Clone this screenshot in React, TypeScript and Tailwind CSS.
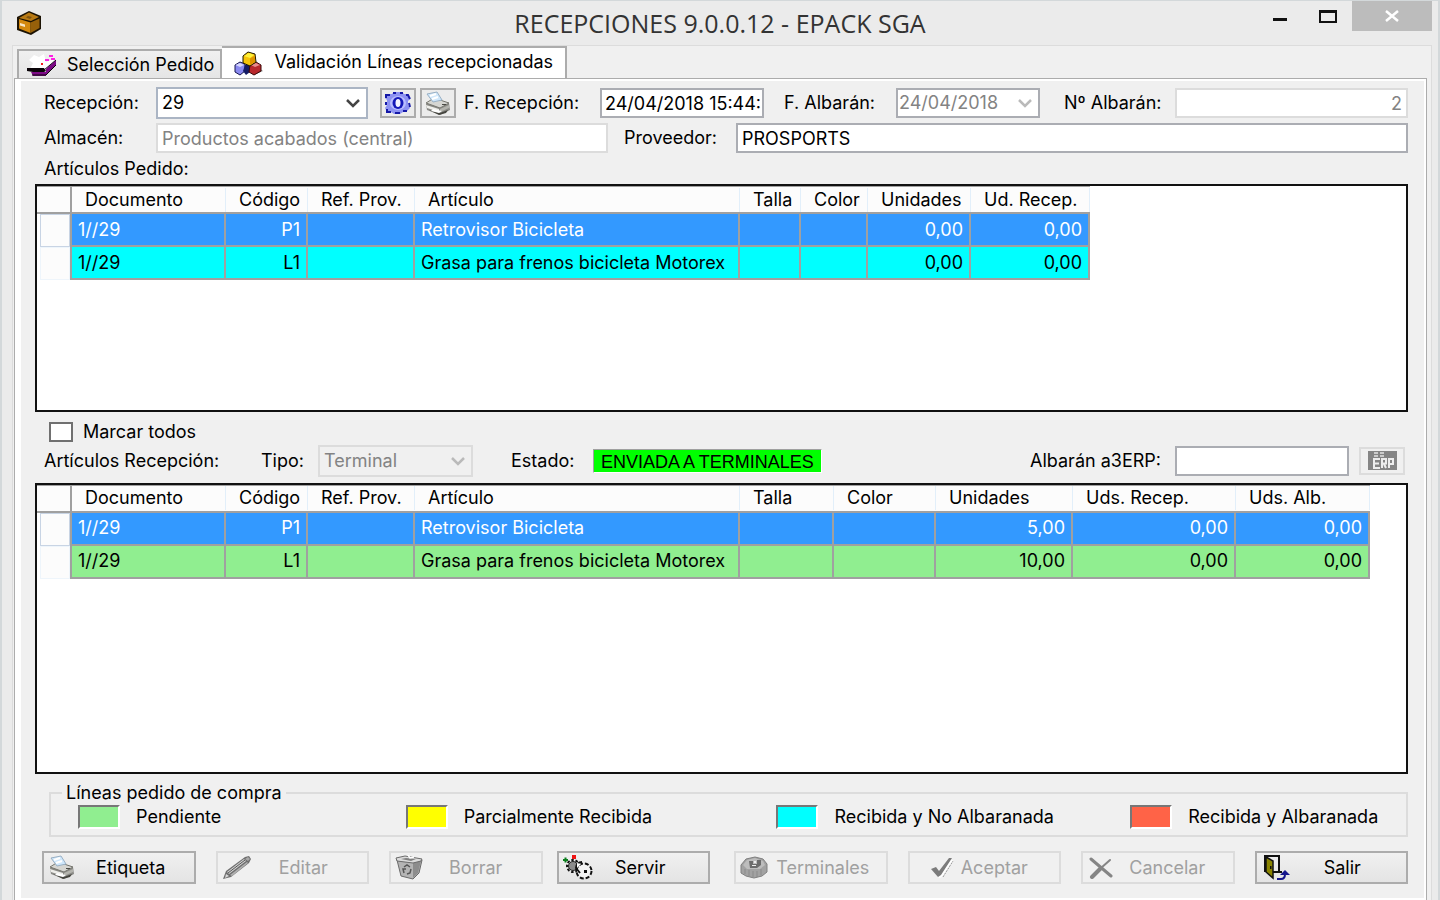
import { useState } from 'react';
import type { ReactNode } from 'react';
import clsx from 'clsx';

function BoxIcon() {
    return (
        <svg width="26" height="26" viewBox="0 0 26 26" aria-hidden="true">
            <path d="M13 1 L25 6 L25 19 L15 25 L1 20 L1 7 Z" fill="#1c1304" />
            <path d="M13 2.500 L23 7 L15 11 L3 8 Z" fill="#b87a14" />
            <path d="M3 9 L14.500 12.500 L14.500 23 L3 18.500 Z" fill="#d4890f" />
            <path d="M14.500 12.500 L23.500 8.500 L23.500 18 L14.500 23 Z" fill="#96600a" />
            <path d="M12 6 L16 7 L14 9 L10 7.500 Z" fill="#7d5310" />
            <path d="M4 13 L9 14.500 L9 17 L4 15.500 Z" fill="#f7e6c8" />
        </svg>
    );
}

function ScannerIcon() {
    return (
        <svg width="30" height="24" viewBox="0 0 30 24" aria-hidden="true">
            <path d="M2 7 L7 2 L12 4 L17 1 L19 9 L29 5 L17 17 L3 16 L6 10 Z" fill="#fff" />
            <path d="M19 16 L29 7 V12 L19 22 Z" fill="#7d0a86" />
            <path d="M4 19 H19 V23 H6 Z" fill="#7d0a86" />
            <path d="M0 15 L17 15 L19 18 L17 19 H6 L0 18 Z" fill="#0a0408" />
            <path d="M17 17 L29 7" stroke="#1a001c" strokeWidth="1" />
            <path d="M5 22 H19 L29 12" fill="none" stroke="#0a0408" strokeWidth="1" />
            <path d="M22 2 h4 v2 h-4 z M18 6 h4 v2 h-4 z M24 5 h4 v2 h-4 z" fill="#ff1fe4" />
            <path d="M14 10 h2 v2 h-2 z" fill="#f31a1a" />
        </svg>
    );
}

function CubesIcon() {
    return (
        <svg width="30" height="25" viewBox="0 0 30 25" aria-hidden="true">
            <path d="M20 24 L29 20 L26 18 L19 21 Z" fill="#8d8d8d" />
            <path d="M1 14 L6 11 L11 13 L11 20 L6 24 L1 21 Z" fill="#8a8af0" stroke="#181850" strokeWidth="1" />
            <path d="M1.500 14 L6 12 L10 14 L6 16 Z" fill="#d6d6ff" />
            <path d="M11 14 L16 14 L16 21 L12 24 L9 20 Z" fill="#141c66" />
            <path d="M16 14 L22 11 L27 14 L27 20 L20 24 L15 21 Z" fill="#b8282c" stroke="#3a0808" strokeWidth="1" />
            <path d="M17 14 L22 12 L26 14 L21 16 Z" fill="#e88c8c" />
            <path d="M9 5 L14 1 L21 3 L22 11 L16 15 L9 12 Z" fill="#f6c40a" stroke="#1d1800" strokeWidth="1" />
            <path d="M10 5 L15 2 L20 4 L16 7 Z" fill="#fff23a" />
            <path d="M16 7.500 L21 4.500 L21 11 L16 14 Z" fill="#e09500" />
        </svg>
    );
}

function GearIcon() {
    return (
        <svg width="28" height="24" viewBox="0 0 28 24" aria-hidden="true">
            <path d="M3 3 H8 L10 1 H18 L20 3 H24 L26 8 L24 10 V14 L26 17 L22 21 H19 L16 23 H10 L7 21 H3 L1 17 L3 14 V9 L1 7 Z" fill="#8d92f2" />
            <path d="M2 7 V4 H6 M9 2 H12 M16 2 H19 M22 4 H24 L26 8 M25 12 L26 16 M23 20 H19 M16 22 H11 M7 21 H3 V18 M2 14 V11" fill="none" stroke="#1418a8" strokeWidth="2" />
            <ellipse cx="14" cy="12" rx="8" ry="7" fill="#b9bdff" />
            <ellipse cx="14" cy="12" rx="5.500" ry="6" fill="#1418b8" />
            <ellipse cx="14" cy="12" rx="2.500" ry="4" fill="#f4f4ff" />
        </svg>
    );
}

function PrinterIcon() {
    return (
        <svg width="28" height="25" viewBox="0 0 28 25" aria-hidden="true">
            <path d="M2 13 L10 8 L25 12 L26 19 L16 24 L3 19 Z" fill="#8a8a86" />
            <path d="M2 12 L10 7 L25 12 L16 17 Z" fill="#d6d6d2" stroke="#77776f" strokeWidth="1" />
            <path d="M3 3 L13 1 L18 9 L9 11 Z" fill="#cfe7fb" stroke="#9ab0c4" strokeWidth="1" />
            <path d="M6 5 L12 3 M8 8 L14 6" stroke="#fff" strokeWidth="2" />
            <path d="M2 14 L15 18 L15 21 L3 17 Z" fill="#eeeeea" />
            <path d="M16 18 L25 14 L25 17 L16 21 Z" fill="#b4b4ae" />
            <path d="M5 19 L16 22 L24 19 L22 22 L15 24 Z" fill="#45453f" />
            <path d="M9 18 L18 20 L15 22 L7 20 Z" fill="#fff" />
            <path d="M18 13 h4 v1 h-4 z" fill="#4b4b46" />
        </svg>
    );
}

function PencilIcon() {
    return (
        <svg width="30" height="25" viewBox="0 0 30 25" aria-hidden="true">
            <path d="M1 24 L4 16 L23 2 L27 1 L29 4 L27 8 L9 22 Z" fill="#6f6f6f" />
            <path d="M5 17 L22 4 L24 6 L7 19 Z" fill="#d2d2d2" />
            <path d="M8 20 L25 7 L26 8 L10 21 Z" fill="#b0b0b0" />
            <path d="M23 4 L26 2 L28 4 L26 6 Z" fill="#a8a8a8" />
            <path d="M4 19 L7 21 L3 23 Z" fill="#d8d8d8" />
            <path d="M6 18 L23 5" stroke="#555" strokeWidth="1" />
        </svg>
    );
}

function BinIcon() {
    return (
        <svg width="28" height="25" viewBox="0 0 28 25" aria-hidden="true">
            <path d="M2 5 L6 21 L18 24 L24 18 L27 5 Z" fill="#b4b4b4" stroke="#6a6a6a" strokeWidth="1" />
            <path d="M18 8 L26 6 L23 18 L18 23 Z" fill="#8c8c8c" />
            <path d="M1 3 L10 1 L27 4 L26 6 L18 8 L2 6 Z" fill="#dcdcdc" stroke="#6a6a6a" strokeWidth="1" />
            <path d="M6 4 L11 3 L21 4 L16 6 Z" fill="#808080" />
            <path d="M13 0 L15 3 L19 2" fill="none" stroke="#fff" strokeWidth="1.500" />
            <path d="M9 12 L12 10 L15 12 M16 14 L15 18 L12 19 M9 18 L8 14 L11 14" fill="none" stroke="#555" strokeWidth="1.500" />
        </svg>
    );
}

function ServeIcon() {
    return (
        <svg width="30" height="25" viewBox="0 0 30 25" aria-hidden="true">
            <path d="M0 4 h5 v2 h-5 z M1.500 2.500 h2 v5 h-2 z" fill="#0a7d1c" />
            <path d="M9 0 h4 v4 h-4 z" fill="#ee1414" />
            <circle cx="10" cy="11" r="6" fill="none" stroke="#111" strokeWidth="2" strokeDasharray="2.500 1.800" />
            <circle cx="10" cy="11" r="4.500" fill="#8c8c8c" stroke="#222" strokeWidth="1" />
            <circle cx="21" cy="16" r="7" fill="#f4f4f4" />
            <circle cx="21" cy="16" r="7.500" fill="none" stroke="#111" strokeWidth="2" strokeDasharray="4 2" />
            <path d="M21 15 h3 v3 h-3 z" fill="#111" />
            <path d="M19 7 A6 6 0 0 0 13 13 L17 18" fill="none" stroke="#111" strokeWidth="2" />
            <path d="M14 8 L18 9 L14 13 Z" fill="#fff" />
        </svg>
    );
}

function TerminalIcon() {
    return (
        <svg width="28" height="23" viewBox="0 0 28 23" aria-hidden="true">
            <path d="M1 9 L6 3 L15 1 L23 3 L27 8 V16 L22 20 L14 22 L6 20 L1 17 Z" fill="#a2a2a2" stroke="#808080" strokeWidth="1" />
            <path d="M3 9 L7 4 L15 2 L23 5 L25 9 L20 13 H7 Z" fill="#bdbdbd" />
            <path d="M9 5 h4 v3 h4 v-4 h4 v5 l-4 3 h-7 z" fill="#6c6c6c" />
            <path d="M14 5 h2 v2 h-2 z M12 9 h4 v1 h-4 z" fill="#eee" />
            <path d="M5 13 V18 M9 14 V20 M13 15 V21 M17 15 V21 M21 13 V19" fill="none" stroke="#8a8a8a" strokeWidth="1" />
        </svg>
    );
}

function CheckIcon() {
    return (
        <svg width="24" height="22" viewBox="0 0 24 22" aria-hidden="true">
            <path d="M4 14 L7 13 L10 17 L20 3 L23 3 L12 20 L9 21 Z" fill="#fff" />
            <path d="M1 12 L6 10 L9 14 L19 1 L22 1 L11 18 L8 20 Z" fill="#7b7b7b" />
            <path d="M13 20 L23 4" stroke="#9a9a9a" strokeWidth="1" strokeDasharray="2 1" />
        </svg>
    );
}

function CrossIcon() {
    return (
        <svg width="25" height="22" viewBox="0 0 25 22" aria-hidden="true">
            <path d="M2 2 L22 19" stroke="#858585" strokeWidth="3" strokeLinecap="round" />
            <path d="M21 3 L12 11" stroke="#858585" strokeWidth="2" strokeLinecap="round" />
            <path d="M12 11 L3 20" stroke="#858585" strokeWidth="4" strokeLinecap="round" />
        </svg>
    );
}

function DoorIcon() {
    return (
        <svg width="28" height="25" viewBox="0 0 28 25" aria-hidden="true">
            <path d="M2 17 V1 H16 V17 H19" fill="none" stroke="#111" strokeWidth="2" />
            <path d="M10 17 H16" stroke="#111" strokeWidth="2" />
            <path d="M3 2 L10 6 V23 L3 17 Z" fill="#8a8400" stroke="#111" strokeWidth="1.500" />
            <path d="M7 11 h1.500 v3 h-1.500 z" fill="#111" />
            <path d="M14 24 H18 Q22 24 22 19" fill="none" stroke="#16168c" strokeWidth="2" />
            <path d="M17 20 L22 15 L27 20 Z" fill="#16168c" />
        </svg>
    );
}

function ErpIcon() {
    return (
        <svg width="29" height="19" viewBox="0 0 29 19" aria-hidden="true">
            <path d="M0 0 h29 v19 h-29 z" fill="#858585" />
            <path d="M6 2 h4 M6 5 h4 M12 2 h4 M12 5 h4" stroke="#e4e4e4" strokeWidth="1.500" />
            <path d="M12 8 H6 V17 H12 M6 12.500 H11 M14 17 V8 H18 V12.500 H14 M16 13 L18 17 M21 17 V8 H25 V13 H21" fill="none" stroke="#ededed" strokeWidth="2" />
        </svg>
    );
}

function Chevron({ className }: { className: string }) {
    return (
        <svg
            className={clsx('pointer-events-none absolute top-1/2 -translate-y-1/2', className)}
            width="14"
            height="10"
            viewBox="0 0 14 10"
            aria-hidden="true"
        >
            <path d="M1 2 L7 8 L13 2" fill="none" stroke="currentColor" strokeWidth="2.500" />
        </svg>
    );
}

type Column = { title: string; width: string; right?: boolean };

const baseColumns: Column[] = [
    { title: 'Documento', width: 'w-[154px]' },
    { title: 'Código', width: 'w-[82px]', right: true },
    { title: 'Ref. Prov.', width: 'w-[107px]' },
    { title: 'Artículo', width: 'w-[325px]' },
];

const orderColumns: Column[] = [
    ...baseColumns,
    { title: 'Talla', width: 'w-[61px]' },
    { title: 'Color', width: 'w-[67px]' },
    { title: 'Unidades', width: 'w-[103px]', right: true },
    { title: 'Ud. Recep.', width: 'w-[119px]', right: true },
];

const receptionColumns: Column[] = [
    ...baseColumns,
    { title: 'Talla', width: 'w-[94px]' },
    { title: 'Color', width: 'w-[102px]' },
    { title: 'Unidades', width: 'w-[137px]', right: true },
    { title: 'Uds. Recep.', width: 'w-[163px]', right: true },
    { title: 'Uds. Alb.', width: 'w-[134px]', right: true },
];

const orderRows = [
    ['1//29', 'P1', '', 'Retrovisor Bicicleta', '', '', '0,00', '0,00'],
    ['1//29', 'L1', '', 'Grasa para frenos bicicleta Motorex', '', '', '0,00', '0,00'],
];

const receptionRows = [
    ['1//29', 'P1', '', 'Retrovisor Bicicleta', '', '', '5,00', '0,00', '0,00'],
    ['1//29', 'L1', '', 'Grasa para frenos bicicleta Motorex', '', '', '10,00', '0,00', '0,00'],
];

const legend = [
    { label: 'Pendiente', color: 'bg-[#90ee90]' },
    { label: 'Parcialmente Recibida', color: 'bg-[#ffff00]' },
    { label: 'Recibida y No Albaranada', color: 'bg-[#00ffff]' },
    { label: 'Recibida y Albaranada', color: 'bg-[#ff6347]' },
];

type GridProps = { label: string; columns: Column[]; rows: string[][]; rowColor: string };

function DataGrid({ label, columns, rows, rowColor }: GridProps) {
    const [selected, setSelected] = useState(0);

    return (
        <table aria-label={label} className="w-max table-fixed border-separate border-spacing-0 whitespace-nowrap">
            <thead>
                <tr className="h-7 bg-[#fcfcfc]">
                    <th className="w-[35px] border-t border-r-2 border-b-2 border-[#a0a0a0]" />
                    {columns.map((col) => (
                        <th
                            key={col.title}
                            className={clsx('border-t border-b-2 border-[#a0a0a0] p-0 text-left font-normal', col.width)}
                        >
                            <div className="h-6 border-r border-[#e2effa] pl-[13px]">{col.title}</div>
                        </th>
                    ))}
                </tr>
            </thead>
            <tbody>
                {rows.map((row, i) => (
                    <tr
                        key={i}
                        onClick={() => setSelected(i)}
                        className={clsx('h-[33px]', i === selected ? 'bg-[#3399ff] text-white' : rowColor)}
                    >
                        <td
                            className={clsx(
                                'border-r-2 border-r-[#a0a0a0] bg-white p-0 pl-[3px]',
                                i === selected ? 'text-[#c8d4e4]' : 'text-[#eef5fb]',
                            )}
                        >
                            <div className="h-[33px] border border-current bg-[#fcfcfc]" />
                        </td>
                        {row.map((cell, j) => (
                            <td
                                key={j}
                                className={clsx(
                                    'border-r-2 border-b-2 border-[#a0a0a0] p-0 pr-1.5 pl-1.5',
                                    columns[j].right && 'text-right',
                                )}
                            >
                                {cell}
                            </td>
                        ))}
                    </tr>
                ))}
            </tbody>
        </table>
    );
}

type ActionProps = { label: string; icon: ReactNode; disabled?: boolean; className: string };

function ActionButton({ label, icon, disabled, className }: ActionProps) {
    return (
        <button
            disabled={disabled}
            className={clsx(
                'flex h-[33px] flex-[1_1_150px] items-center border-2',
                disabled
                    ? 'border-[#dcdcdc] text-[#a0a0a0]'
                    : 'border-[#acacac] bg-linear-to-b from-[#f0f0f0] to-[#e4e4e4]',
                className,
            )}
        >
            {icon}
            <span className="flex-1 text-center">{label}</span>
        </button>
    );
}

export default function App() {
    const [markAll, setMarkAll] = useState(false);

    return (
        <div className="flex min-h-screen min-w-max flex-col border-x-2 border-t border-[#d3d8da] bg-[#ebebeb] font-['Inter','Liberation_Sans',sans-serif] text-[18px] leading-6 text-black">
            <header className="grid h-11 grid-cols-[1fr_auto_1fr]">
                <div className="flex items-center pl-3.5">
                    <BoxIcon />
                </div>
                <h1 className="self-center font-['Open_Sans','Noto_Sans',sans-serif] text-[25px] text-[#333]">
                    RECEPCIONES 9.0.0.12 - EPACK SGA
                </h1>
                <div className="flex h-[30px] justify-end pr-1.5">
                    <button aria-label="Minimizar" className="flex w-12 items-center justify-center">
                        <svg width="14" height="12" viewBox="0 0 14 12">
                            <path d="M0 8 h14 v3 h-14 z" fill="#111" />
                        </svg>
                    </button>
                    <button aria-label="Maximizar" className="flex w-12 items-center justify-center">
                        <svg width="18" height="13" viewBox="0 0 18 13">
                            <path d="M1 0 V12 H17 V0" fill="none" stroke="#111" strokeWidth="2" />
                            <path d="M0 0 h18 v3 h-18 z" fill="#111" />
                        </svg>
                    </button>
                    <button aria-label="Cerrar" className="flex w-20 items-center justify-center bg-[#bcbcbc]">
                        <svg width="14" height="12" viewBox="0 0 14 12">
                            <path d="M1 1 L13 11 M13 1 L1 11" stroke="#fff" strokeWidth="2.500" />
                        </svg>
                    </button>
                </div>
            </header>

            <main className="mr-1.5 ml-2.5 flex flex-1 flex-col border border-b-0 border-[#dcdcdc] bg-[#f0f0f0] pr-1 pl-px">
                <div role="tablist" className="flex items-end pl-[3px]">
                    <button
                        role="tab"
                        aria-selected="false"
                        className="flex h-[29px] items-center gap-2.5 border-2 border-b-0 border-[#acacac] bg-linear-to-b from-[#f0f0f0] to-[#e5e5e5] pr-1.5 pl-2"
                    >
                        <ScannerIcon />
                        Selección Pedido
                    </button>
                    <button
                        role="tab"
                        aria-selected="true"
                        className="-mb-px flex h-[33px] items-center gap-2.5 border-2 border-b-0 border-l-0 border-[#acacac] bg-white px-3"
                    >
                        <CubesIcon />
                        <span className="pb-1">Validación Líneas recepcionadas</span>
                    </button>
                </div>

                <div className="flex flex-1 flex-col border border-b-0 border-[#acacac] bg-white pt-0.5 pr-0.5 pb-0.5 pl-1.5">
                    <div className="flex flex-1 flex-col bg-[#f0f0f0] pt-1.5 pr-4 pb-[14px] pl-[14px]">
                        <div className="flex h-8 items-center pl-[9px]">
                            <label htmlFor="recepcion" className="w-28">Recepción:</label>
                            <div className="relative w-[212px]">
                                <select
                                    id="recepcion"
                                    className="h-8 w-full appearance-none border-2 border-[#abb5c4] bg-white pl-1"
                                >
                                    <option>29</option>
                                </select>
                                <Chevron className="right-2 text-[#444]" />
                            </div>
                            <button
                                aria-label="Configurar"
                                className="ml-3 flex h-[30px] w-9 items-center justify-center border-2 border-[#acacac] bg-[#ececec]"
                            >
                                <GearIcon />
                            </button>
                            <button
                                aria-label="Imprimir"
                                className="ml-1 flex h-[30px] w-9 items-center justify-center border-2 border-[#acacac] bg-[#ececec]"
                            >
                                <PrinterIcon />
                            </button>
                            <label htmlFor="f-recepcion" className="ml-2 w-[136px]">F. Recepción:</label>
                            <input
                                id="f-recepcion"
                                defaultValue="24/04/2018 15:44:"
                                className="h-[30px] w-[164px] border-2 border-[#abadb3] bg-white pl-[3px]"
                            />
                            <label htmlFor="f-albaran" className="ml-5 w-28">F. Albarán:</label>
                            <div className="relative w-36 text-[#838383]">
                                <select
                                    id="f-albaran"
                                    disabled
                                    className="h-[30px] w-full appearance-none border-2 border-[#abadb3] bg-white pl-px opacity-100"
                                >
                                    <option>24/04/2018</option>
                                </select>
                                <Chevron className="right-2 text-[#bababa]" />
                            </div>
                            <label htmlFor="n-albaran" className="ml-6 w-[111px]">Nº Albarán:</label>
                            <input
                                id="n-albaran"
                                disabled
                                defaultValue="2"
                                className="h-[30px] w-0 flex-1 border-2 border-[#dcdcdc] bg-white pr-1 text-right text-[#838383]"
                            />
                        </div>

                        <div className="mt-1 flex h-[30px] items-center pl-[9px]">
                            <label htmlFor="almacen" className="w-28">Almacén:</label>
                            <input
                                id="almacen"
                                disabled
                                defaultValue="Productos acabados (central)"
                                className="h-[30px] w-[452px] border-2 border-[#dcdcdc] bg-white pl-1 text-[#838383]"
                            />
                            <label htmlFor="proveedor" className="ml-4 w-28">Proveedor:</label>
                            <input
                                id="proveedor"
                                defaultValue="PROSPORTS"
                                className="h-[30px] w-0 flex-1 border-2 border-[#abadb3] bg-white pl-1"
                            />
                        </div>

                        <h2 className="pt-1 pb-[3px] pl-[9px]">Artículos Pedido:</h2>
                        <section className="flex-[226_1_0] border-2 border-[#111] bg-white">
                            <DataGrid label="Artículos Pedido" columns={orderColumns} rows={orderRows} rowColor="bg-[#00ffff]" />
                        </section>

                        <label className="mt-2 flex h-6 items-center gap-2.5 self-start pl-[14px]">
                            <input
                                type="checkbox"
                                checked={markAll}
                                onChange={(e) => setMarkAll(e.target.checked)}
                                className="h-5 w-6 appearance-none border-2 border-[#707070] bg-white checked:bg-[#707070]"
                            />
                            Marcar todos
                        </label>

                        <div className="mt-px flex h-8 items-center pl-[9px]">
                            <h2 className="w-[217px]">Artículos Recepción:</h2>
                            <label htmlFor="tipo" className="w-[57px]">Tipo:</label>
                            <div className="relative w-[155px] text-[#838383]">
                                <select
                                    id="tipo"
                                    disabled
                                    className="h-8 w-full appearance-none border-2 border-[#dcdcdc] bg-[#f0f0f0] pl-1 opacity-100"
                                >
                                    <option>Terminal</option>
                                </select>
                                <Chevron className="right-2 text-[#bababa]" />
                            </div>
                            <span className="ml-[38px] w-[82px]">Estado:</span>
                            <output className="h-6 border border-t-[#a0a0a0] border-r-white border-b-white border-l-[#a0a0a0] bg-[#00ff00] px-[7px] font-['Liberation_Sans',sans-serif]">
                                ENVIADA A TERMINALES
                            </output>
                            <label htmlFor="albaran-erp" className="mr-[14px] ml-auto">Albarán a3ERP:</label>
                            <input
                                id="albaran-erp"
                                className="h-[30px] w-[174px] border-2 border-[#abadb3] bg-white pl-1"
                            />
                            <button
                                aria-label="Enviar a a3ERP"
                                disabled
                                className="mr-[3px] ml-2.5 flex h-7 w-[46px] items-center justify-center border-2 border-[#dcdcdc]"
                            >
                                <ErpIcon />
                            </button>
                        </div>

                        <section className="mt-1.5 flex-[290_1_0] border-2 border-[#111] bg-white">
                            <DataGrid label="Artículos Recepción" columns={receptionColumns} rows={receptionRows} rowColor="bg-[#90ee90]" />
                        </section>

                        <fieldset className="mt-[7px] ml-[14px] border-2 border-[#dcdcdc] pb-1.5 pl-[27px]">
                            <legend className="-ml-4 px-1">Líneas pedido de compra</legend>
                            <ul className="grid grid-cols-[328fr_371fr_354fr_276fr]">
                                {legend.map((item) => (
                                    <li key={item.label} className="flex items-center gap-4">
                                        <span
                                            className={clsx(
                                                'h-6 w-[42px] border-2 border-t-[#777] border-r-white border-b-white border-l-[#777]',
                                                item.color,
                                            )}
                                        />
                                        {item.label}
                                    </li>
                                ))}
                            </ul>
                        </fieldset>

                        <footer className="mt-[14px] flex pl-[7px]">
                            <ActionButton label="Etiqueta" icon={<PrinterIcon />} className="pr-2 pl-1" />
                            <ActionButton label="Editar" icon={<PencilIcon />} disabled className="ml-5 pr-3 pl-1" />
                            <ActionButton label="Borrar" icon={<BinIcon />} disabled className="ml-5 pr-3 pl-1" />
                            <ActionButton label="Servir" icon={<ServeIcon />} className="ml-[14px] pr-5 pl-1" />
                            <ActionButton label="Terminales" icon={<TerminalIcon />} disabled className="ml-6 pr-2 pl-1" />
                            <ActionButton label="Aceptar" icon={<CheckIcon />} disabled className="ml-5 pr-6 pl-5" />
                            <ActionButton label="Cancelar" icon={<CrossIcon />} disabled className="ml-5 pr-3 pl-1.5" />
                            <ActionButton label="Salir" icon={<DoorIcon />} className="ml-5 pr-3 pl-1.5" />
                        </footer>
                    </div>
                </div>
            </main>
        </div>
    );
}
